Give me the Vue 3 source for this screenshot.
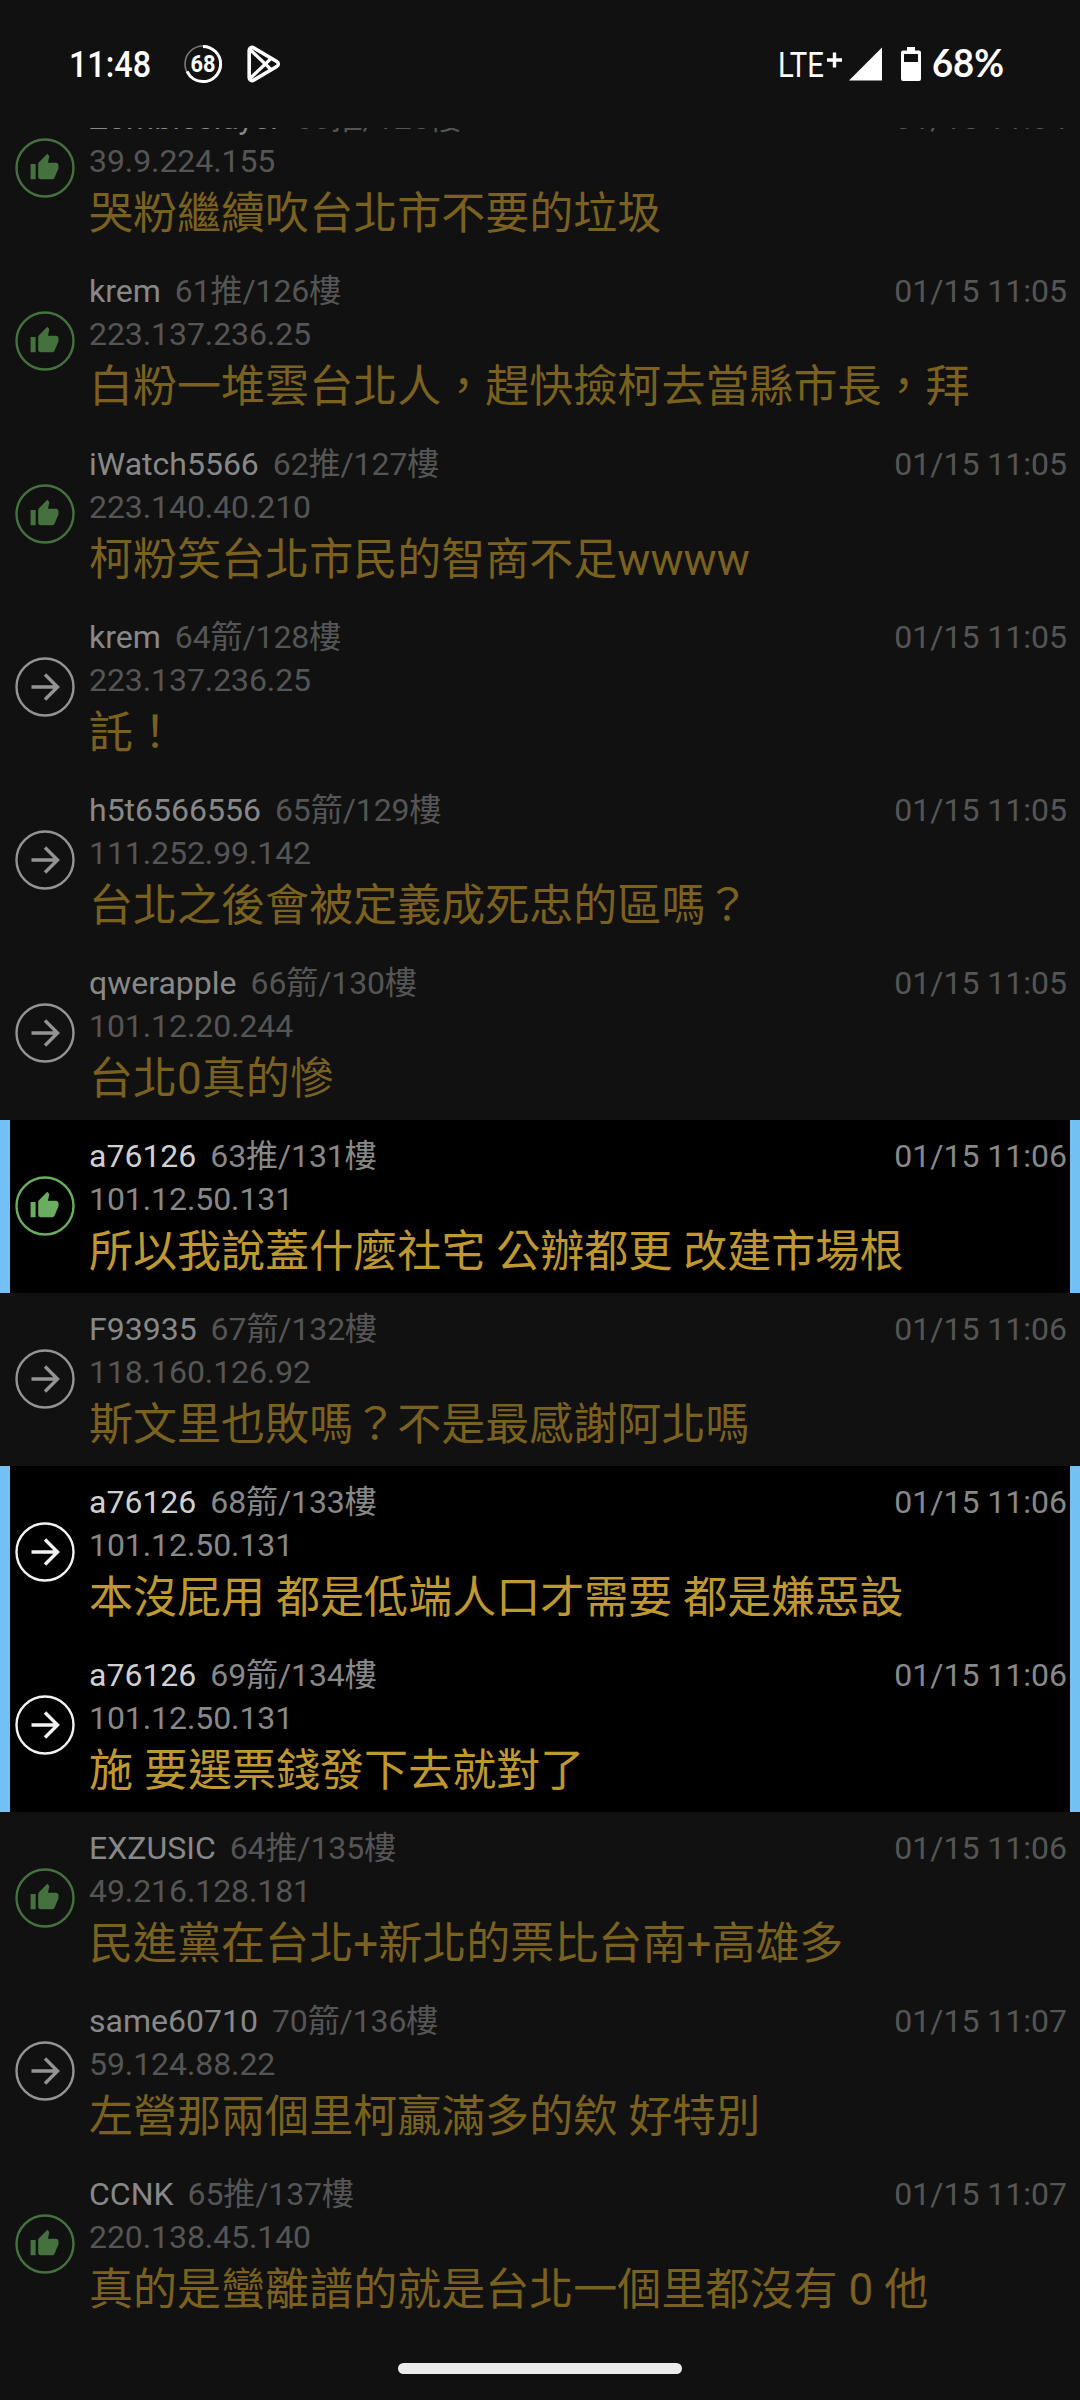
<script setup>
const U = 'up'
const A = 'arrow'
const rows = [
  { k: U, name: 'Zombieslayer', floor: '60推/125樓', time: '01/15 11:04', ip: '39.9.224.155', text: '哭粉繼續吹台北市不要的垃圾' },
  { k: U, name: 'krem', floor: '61推/126樓', time: '01/15 11:05', ip: '223.137.236.25', text: '白粉一堆雲台北人，趕快撿柯去當縣市長，拜' },
  { k: U, name: 'iWatch5566', floor: '62推/127樓', time: '01/15 11:05', ip: '223.140.40.210', text: '柯粉笑台北市民的智商不足wwww' },
  { k: A, name: 'krem', floor: '64箭/128樓', time: '01/15 11:05', ip: '223.137.236.25', text: '託！' },
  { k: A, name: 'h5t6566556', floor: '65箭/129樓', time: '01/15 11:05', ip: '111.252.99.142', text: '台北之後會被定義成死忠的區嗎？' },
  { k: A, name: 'qwerapple', floor: '66箭/130樓', time: '01/15 11:05', ip: '101.12.20.244', text: '台北0真的慘' },
  { k: U, name: 'a76126', floor: '63推/131樓', time: '01/15 11:06', ip: '101.12.50.131', text: '所以我說蓋什麼社宅 公辦都更 改建市場根', on: true },
  { k: A, name: 'F93935', floor: '67箭/132樓', time: '01/15 11:06', ip: '118.160.126.92', text: '斯文里也敗嗎？不是最感謝阿北嗎' },
  { k: A, name: 'a76126', floor: '68箭/133樓', time: '01/15 11:06', ip: '101.12.50.131', text: '本沒屁用 都是低端人口才需要 都是嫌惡設', on: true },
  { k: A, name: 'a76126', floor: '69箭/134樓', time: '01/15 11:06', ip: '101.12.50.131', text: '施 要選票錢發下去就對了', on: true },
  { k: U, name: 'EXZUSIC', floor: '64推/135樓', time: '01/15 11:06', ip: '49.216.128.181', text: '民進黨在台北+新北的票比台南+高雄多' },
  { k: A, name: 'same60710', floor: '70箭/136樓', time: '01/15 11:07', ip: '59.124.88.22', text: '左營那兩個里柯贏滿多的欸 好特別' },
  { k: U, name: 'CCNK', floor: '65推/137樓', time: '01/15 11:07', ip: '220.138.45.140', text: '真的是蠻離譜的就是台北一個里都沒有 0 他' },
]
</script>

<template>
  <div class="screen">
    <header class="status">
      <svg class="clock" width="84" height="56" viewBox="0 0 84 56">
        <text x="0" y="41" font-size="37" font-weight="500" textLength="82" lengthAdjust="spacingAndGlyphs">11:48</text>
      </svg>
      <svg class="ring" width="40" height="40" viewBox="0 0 40 40">
        <circle cx="20" cy="20" r="18" fill="none" stroke="#777" stroke-width="1.6" />
        <circle cx="20" cy="20" r="17.6" fill="none" stroke="#fff" stroke-width="3" pathLength="100" stroke-dasharray="68 32" transform="rotate(-90 20 20)" />
        <text x="20" y="28" font-size="23" font-weight="700" text-anchor="middle" textLength="25" lengthAdjust="spacingAndGlyphs">68</text>
      </svg>
      <svg class="play" width="36" height="38" viewBox="0 0 36 38" fill="none" stroke="#fff" stroke-width="3.6" stroke-linejoin="round" stroke-linecap="round">
        <path d="M3.2 5.4v27.200c0 2.400 2.400 3.700 4.400 2.500l23.200-13.600c2-1.200 2-3.800 0-5L7.600 2.900C5.600 1.700 3.200 3 3.200 5.400Z" />
        <path d="M4 4.500 25 24.500M4 33.500 25 13.500" stroke-width="3.200" />
      </svg>
      <span class="grow"></span>
      <svg class="lte" width="68" height="56" viewBox="0 0 68 56">
        <text x="1" y="41" font-size="35.500" font-weight="400" textLength="46" lengthAdjust="spacingAndGlyphs">LTE</text>
        <path d="M50 24h15M57.500 16.500v15" stroke="#fff" stroke-width="3.400" />
      </svg>
      <svg class="signal" width="34" height="34" viewBox="0 0 34 34"><path d="M0 33.500 33 .5v33Z" fill="#fff" /></svg>
      <svg class="battery" width="20" height="34" viewBox="0 0 20 34">
        <path fill="#fff" fill-rule="evenodd" d="M6 0h8v3.500h4a2 2 0 0 1 2 2V32a2 2 0 0 1-2 2H2a2 2 0 0 1-2-2V5.500a2 2 0 0 1 2-2h4ZM3 7v8h14V7Z" />
      </svg>
      <svg class="percent" width="74" height="56" viewBox="0 0 74 56">
        <text x="0" y="41" font-size="37.500" font-weight="700" textLength="72" lengthAdjust="spacingAndGlyphs">68%</text>
      </svg>
    </header>

    <main class="list">
      <article v-for="r in rows" :key="r.floor" class="row" :class="{ on: r.on }">
        <div class="icon" :class="r.k">
          <svg viewBox="0 0 60 60" width="60" height="60">
            <circle cx="30" cy="30" r="28.500" fill="none" stroke="currentColor" stroke-width="2.400" />
            <g v-if="r.k === 'up'" fill="currentColor" transform="translate(14.300 14.600) scale(1.270)">
              <path d="M1 21h4V9H1v12zm22-11c0-1.100-.9-2-2-2h-6.310l.95-4.570.03-.32c0-.41-.17-.79-.44-1.060L14.170 1 7.590 7.590C7.220 7.950 7 8.450 7 9v10c0 1.100.9 2 2 2h9c.83 0 1.540-.5 1.840-1.220l3.020-7.050c.09-.23.14-.47.14-.73v-2z" />
            </g>
            <path v-else d="M16.500 30H42M30 17.500 42.500 30 30 42.500" fill="none" stroke="currentColor" stroke-width="3.400" />
          </svg>
        </div>
        <div class="body">
          <div class="meta">
            <span class="name">{{ r.name }}</span>
            <span class="floor">{{ r.floor }}</span>
            <time>{{ r.time }}</time>
          </div>
          <div class="ip">{{ r.ip }}</div>
          <p class="text">{{ r.text }}</p>
        </div>
      </article>
    </main>

    <footer class="nav"><span class="pill"></span></footer>
  </div>
</template>

<style>
body {
  background: #111;
}
</style>

<style scoped>
.screen {
  width: 1080px;
  height: 2400px;
  display: flex;
  flex-direction: column;
  overflow: hidden;
  background: #111;
  font-family: Roboto, "Noto Sans CJK TC", sans-serif;
}
.status {
  flex: none;
  height: 128px;
  box-sizing: border-box;
  padding: 0 74px 0 69px;
  display: flex;
  align-items: center;
}
.status svg {
  display: block;
  flex: none;
  overflow: visible;
}
.status text {
  fill: #fff;
}
.percent text {
  font-family: Lato, sans-serif;
}
.ring {
  margin-left: 30px;
}
.play {
  margin-left: 23px;
}
.grow {
  flex: 1;
}
.lte {
  margin-right: 4px;
}
.signal {
  margin-right: 18px;
}
.battery {
  margin-right: 11px;
}
.list {
  flex: 1;
  min-height: 0;
  overflow: hidden;
  display: flex;
  flex-direction: column;
  justify-content: flex-end;
}
.row {
  flex: none;
  height: 173px;
  box-sizing: border-box;
  display: flex;
  border: solid transparent;
  border-width: 0 10px;
  color: #555;
}
.icon {
  width: 79px;
  padding: 56px 0 0 4.5px;
  box-sizing: border-box;
  flex: none;
}
.icon svg {
  display: block;
}
.icon.up {
  color: #45713f;
}
.icon.arrow {
  color: #949494;
}
.body {
  flex: 1;
  padding: 15px 3px 0 0;
  white-space: nowrap;
}
.meta {
  display: flex;
  font-size: 32px;
  line-height: 43px;
}
.name {
  color: #888;
  margin-right: 14px;
}
.floor {
  letter-spacing: -0.1px;
}
time {
  margin-left: auto;
}
.ip {
  font-size: 32px;
  line-height: 43px;
  letter-spacing: -0.08px;
}
.text {
  margin: 3px 0 0;
  font-size: 44px;
  line-height: 56px;
  letter-spacing: 0.03px;
  color: #7a611f;
}
.on {
  background: #000;
  border-color: #73c0f4;
  color: #888;
}
.on .name {
  color: #d0d0d0;
}
.on .text {
  color: #c09830;
}
.on .icon.up {
  color: #69ae60;
}
.on .icon.arrow {
  color: #f2f2f2;
}
.nav {
  flex: none;
  height: 69px;
  display: flex;
  justify-content: center;
  align-items: flex-start;
}
.pill {
  width: 284px;
  height: 11px;
  margin-top: 32px;
  border-radius: 6px;
  background: #ebebeb;
}
</style>
